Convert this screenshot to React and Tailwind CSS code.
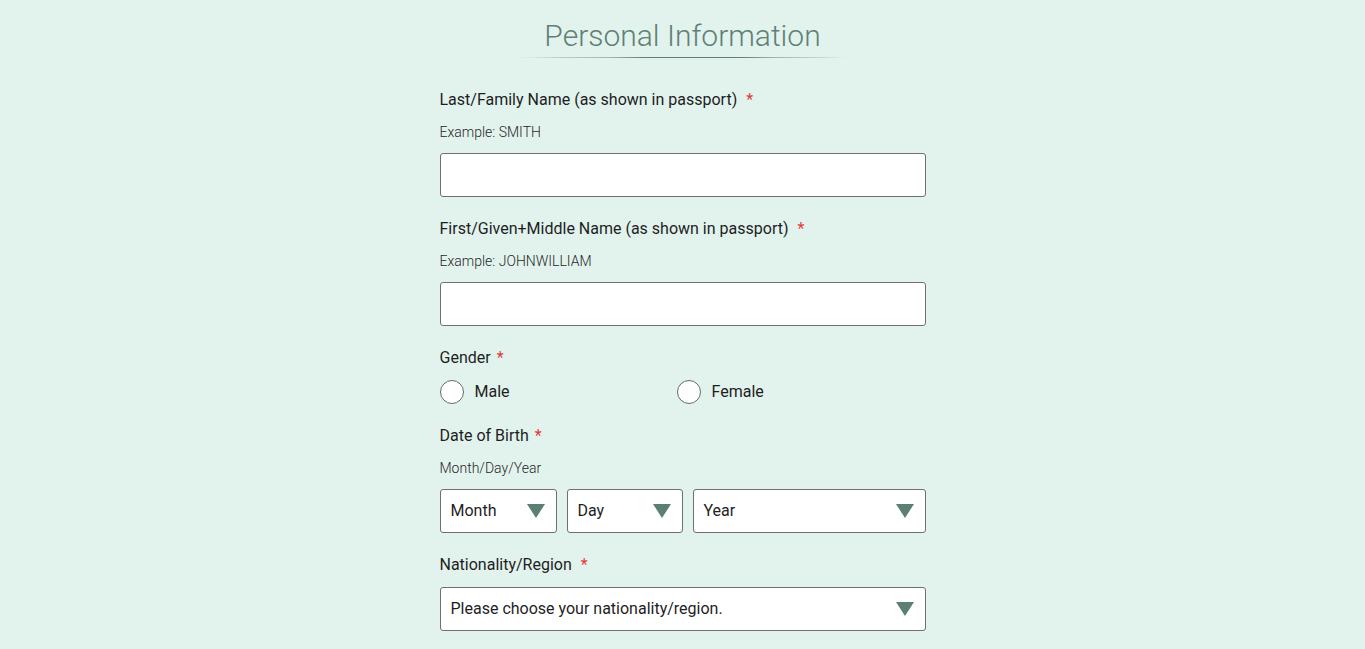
import React from 'react'

const font = { fontFamily: 'Roboto, "Liberation Sans", sans-serif' }

function Star({ gap = 'ml-[5px]' }) {
  return <span className={`${gap} text-[#e53935]`}>*</span>
}

function Caret() {
  return (
    <svg width="18" height="14" viewBox="0 0 18 14" className="shrink-0">
      <polygon points="0,0 18,0 9,14" fill="#5b7f71" />
    </svg>
  )
}

function Select({ label, className = '' }) {
  return (
    <div
      className={`h-[44px] bg-white border border-[#6f6f6f] rounded-[3px] flex items-center justify-between pl-[10px] pr-[11px] text-[16px] text-[#1e1e1e] ${className}`}
    >
      <span>{label}</span>
      <Caret />
    </div>
  )
}

function Radio({ label }) {
  return (
    <label className="w-[237px] flex items-center gap-[11px] text-[16px] text-[#1e1e1e]">
      <span className="w-[24px] h-[24px] rounded-full bg-white border border-[#5f6e68]" />
      {label}
    </label>
  )
}

const labelCls = 'text-[16px] leading-[24px] text-[#1e1e1e]'
const hintCls = 'mt-[10px] text-[14px] leading-[20px] font-light text-[#262626]'
const inputCls = 'mt-[11px] h-[44px] bg-white border border-[#6f6f6f] rounded-[3px]'

export default function App() {
  return (
    <div className="min-h-screen bg-[#e2f3ee]" style={font}>
      <div className="w-[486px] mx-auto">
        {/* titulo */}
        <div className="flex flex-col items-center pt-[15px]">
          <h1 className="text-[30px] font-light leading-[42px] text-[#5f8174]">Personal Information</h1>
          <div className="w-[328px] h-px bg-[linear-gradient(90deg,#e2f3ee_0%,#b9cfc6_12%,#9db8ad_28%,#5f8174_38%,#5f8174_68%,#9db8ad_78%,#c3d6ce_92%,#e2f3ee_100%)]" />
        </div>

        {/* apellido */}
        <div className={`mt-[30px] ${labelCls}`}>
          Last/Family Name (as shown in passport) <Star />
        </div>
        <div className={hintCls}>Example: SMITH</div>
        <div className={inputCls} />

        {/* nombre */}
        <div className={`mt-[20px] ${labelCls}`}>
          First/Given+Middle Name (as shown in passport) <Star />
        </div>
        <div className={hintCls}>Example: JOHNWILLIAM</div>
        <div className={inputCls} />

        {/* genero */}
        <div className={`mt-[20px] ${labelCls}`}>
          Gender <Star gap="ml-0.5" />
        </div>
        <div className="mt-[10px] flex">
          <Radio label="Male" />
          <Radio label="Female" />
        </div>

        {/* fecha de nacimiento */}
        <div className={`mt-[20px] ${labelCls}`}>
          Date of Birth <Star gap="ml-0.5" />
        </div>
        <div className={hintCls}>Month/Day/Year</div>
        <div className="mt-[11px] flex gap-[10px]">
          <Select label="Month" className="w-[117px]" />
          <Select label="Day" className="w-[116px]" />
          <Select label="Year" className="flex-1" />
        </div>

        {/* nacionalidad */}
        <div className={`mt-[20px] ${labelCls}`}>
          Nationality/Region <Star />
        </div>
        <Select label="Please choose your nationality/region." className="mt-[10px]" />
        <div className="h-[40px]" />
      </div>
    </div>
  )
}
